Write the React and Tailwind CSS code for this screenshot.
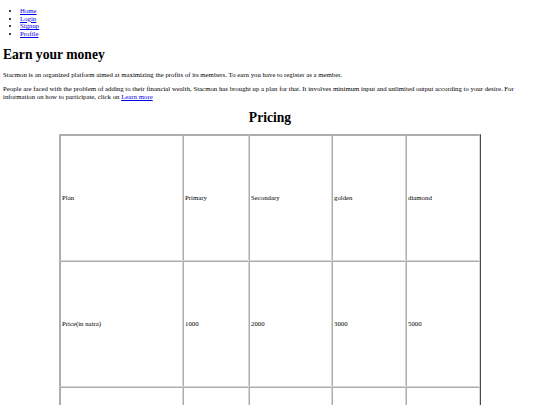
export default function App() {
  const cell = "border border-t-[#acacac] border-l-[#acacac] border-r-[#d6d6d6] border-b-[#d6d6d6] p-0 px-[1px] align-middle text-left font-normal";
  const links = ["Home", "Login", "Signup", "Profile"];
  return (
    <div className="bg-white text-black px-[3px] pt-[7px] pb-[20px] text-[6.8px] leading-[7.67px]" style={{ fontFamily: '"Liberation Serif", "Times New Roman", serif' }}>
      <ul className="list-disc pl-[17px]">
        {links.map((l) => (
          <li key={l}>
            <a href="#" className="text-[#0000ee] underline">{l}</a>
          </li>
        ))}
      </ul>
      <h1 className="text-[13.6px] leading-[15.33px] font-bold mt-[9px] mb-[9px]">Earn your money</h1>
      <p className="mb-[6.67px]">
        Stacmon is an organized platform aimed at maximizing the profits of its members. To earn you have to register as a member.
      </p>
      <p>
        People are faced with the problem of adding to their financial wealth, Stacmon has brought up a plan for that. It involves minimum input and unlimited output according to your desire. For information on how to participate, click on{" "}
        <a href="#" className="text-[#0000ee] underline">Learn more</a>
      </p>
      <h1 className="text-[13.6px] leading-[15.33px] font-bold mt-[9px] mb-[9px] text-center">Pricing</h1>
      <table className="mx-auto w-[422px] border-separate border-spacing-0 border border-t-[#b0b0b0] border-l-[#b0b0b0] border-r-[#4a4a4a] border-b-[#4a4a4a] text-[6.8px] leading-[7.67px]">
        <tbody>
          <tr className="h-[126px]">
            <td className={cell + " w-[123px]"}>Plan</td>
            <td className={cell + " w-[66px]"}>Primary</td>
            <td className={cell + " w-[83px]"}>Secondary</td>
            <td className={cell + " w-[74px]"}>golden</td>
            <td className={cell + " w-[74px]"}>diamond</td>
          </tr>
          <tr className="h-[126px]">
            <td className={cell}>Price(in naira)</td>
            <td className={cell}>1000</td>
            <td className={cell}>2000</td>
            <td className={cell}>3000</td>
            <td className={cell}>5000</td>
          </tr>
          <tr className="h-[126px]">
            <td className={cell}>Returns</td>
            <td className={cell}>1500</td>
            <td className={cell}>3000</td>
            <td className={cell}>4500</td>
            <td className={cell}>7500</td>
          </tr>
        </tbody>
      </table>
    </div>
  );
}
